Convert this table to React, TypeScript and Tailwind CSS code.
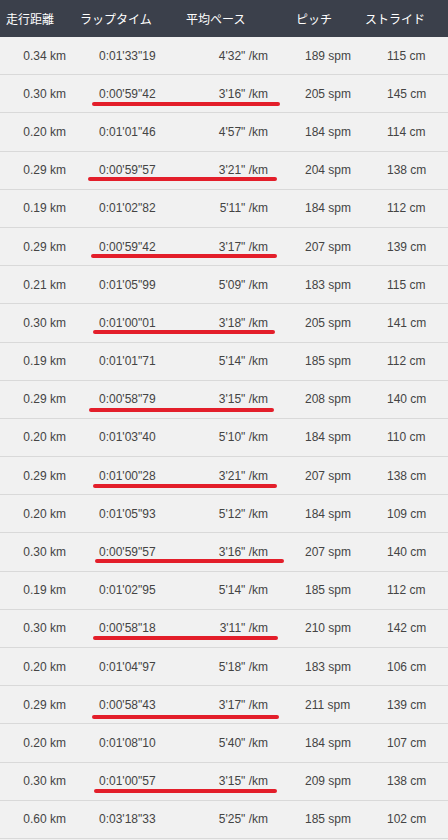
import React from "react";

const rows: [string, string, string, string, string][] = [
  ["0.34 km", "0:01'33\"19", "4'32\" /km", "189 spm", "115 cm"],
  ["0.30 km", "0:00'59\"42", "3'16\" /km", "205 spm", "145 cm"],
  ["0.20 km", "0:01'01\"46", "4'57\" /km", "184 spm", "114 cm"],
  ["0.29 km", "0:00'59\"57", "3'21\" /km", "204 spm", "138 cm"],
  ["0.19 km", "0:01'02\"82", "5'11\" /km", "184 spm", "112 cm"],
  ["0.29 km", "0:00'59\"42", "3'17\" /km", "207 spm", "139 cm"],
  ["0.21 km", "0:01'05\"99", "5'09\" /km", "183 spm", "115 cm"],
  ["0.30 km", "0:01'00\"01", "3'18\" /km", "205 spm", "141 cm"],
  ["0.19 km", "0:01'01\"71", "5'14\" /km", "185 spm", "112 cm"],
  ["0.29 km", "0:00'58\"79", "3'15\" /km", "208 spm", "140 cm"],
  ["0.20 km", "0:01'03\"40", "5'10\" /km", "184 spm", "110 cm"],
  ["0.29 km", "0:01'00\"28", "3'21\" /km", "207 spm", "138 cm"],
  ["0.20 km", "0:01'05\"93", "5'12\" /km", "184 spm", "109 cm"],
  ["0.30 km", "0:00'59\"57", "3'16\" /km", "207 spm", "140 cm"],
  ["0.19 km", "0:01'02\"95", "5'14\" /km", "185 spm", "112 cm"],
  ["0.30 km", "0:00'58\"18", "3'11\" /km", "210 spm", "142 cm"],
  ["0.20 km", "0:01'04\"97", "5'18\" /km", "183 spm", "106 cm"],
  ["0.29 km", "0:00'58\"43", "3'17\" /km", "211 spm", "139 cm"],
  ["0.20 km", "0:01'08\"10", "5'40\" /km", "184 spm", "107 cm"],
  ["0.30 km", "0:01'00\"57", "3'15\" /km", "209 spm", "138 cm"],
  ["0.60 km", "0:03'18\"33", "5'25\" /km", "185 spm", "102 cm"],
];

// [centerY, x1, x2]
const marks: [number, number, number][] = [
  [104, 92, 280],
  [179, 88, 277],
  [256, 91, 277],
  [332, 93, 275],
  [410, 89, 274],
  [486, 93, 277],
  [561, 95, 284],
  [638, 93, 278],
  [717, 92, 279],
  [791, 94, 277],
];

export default function App() {
  return (
    <div
      className="relative w-[448px] h-[840px] overflow-hidden bg-[#f1f1f1]"
      style={{ fontFamily: '"Liberation Sans", Arial, sans-serif' }}
    >
      <div
        className="flex h-[37px] items-center bg-[#3b404b] text-[12px] text-white"
        style={{ fontFamily: '"Noto Sans CJK JP", "Noto Sans", sans-serif' }}
      >
        <div className="w-[80px] pl-[6px]">走行距離</div>
        <div className="w-[106px]">ラップタイム</div>
        <div className="w-[110px]">平均ペース</div>
        <div className="w-[69px]">ピッチ</div>
        <div className="flex-1">ストライド</div>
      </div>
      {rows.map((r, i) => (
        <div
          key={i}
          className="flex h-[38.2px] items-center border-b border-[#d9d9d9] text-[12px] text-[#444444]"
        >
          <div className="w-[80px] pr-[14px] text-right">{r[0]}</div>
          <div className="w-[105px] pl-[19px]">{r[1]}</div>
          <div className="w-[97px] pr-[14px] text-right">{r[2]}</div>
          <div className="w-[88px] pl-[23px]">{r[3]}</div>
          <div className="flex-1 pl-[17px]">{r[4]}</div>
        </div>
      ))}
      {marks.map(([y, x1, x2], i) => (
        <div
          key={i}
          className="absolute h-[4px] rounded-full bg-[#e31e2a]"
          style={{ top: y - 2, left: x1, width: x2 - x1 }}
        />
      ))}
    </div>
  );
}
